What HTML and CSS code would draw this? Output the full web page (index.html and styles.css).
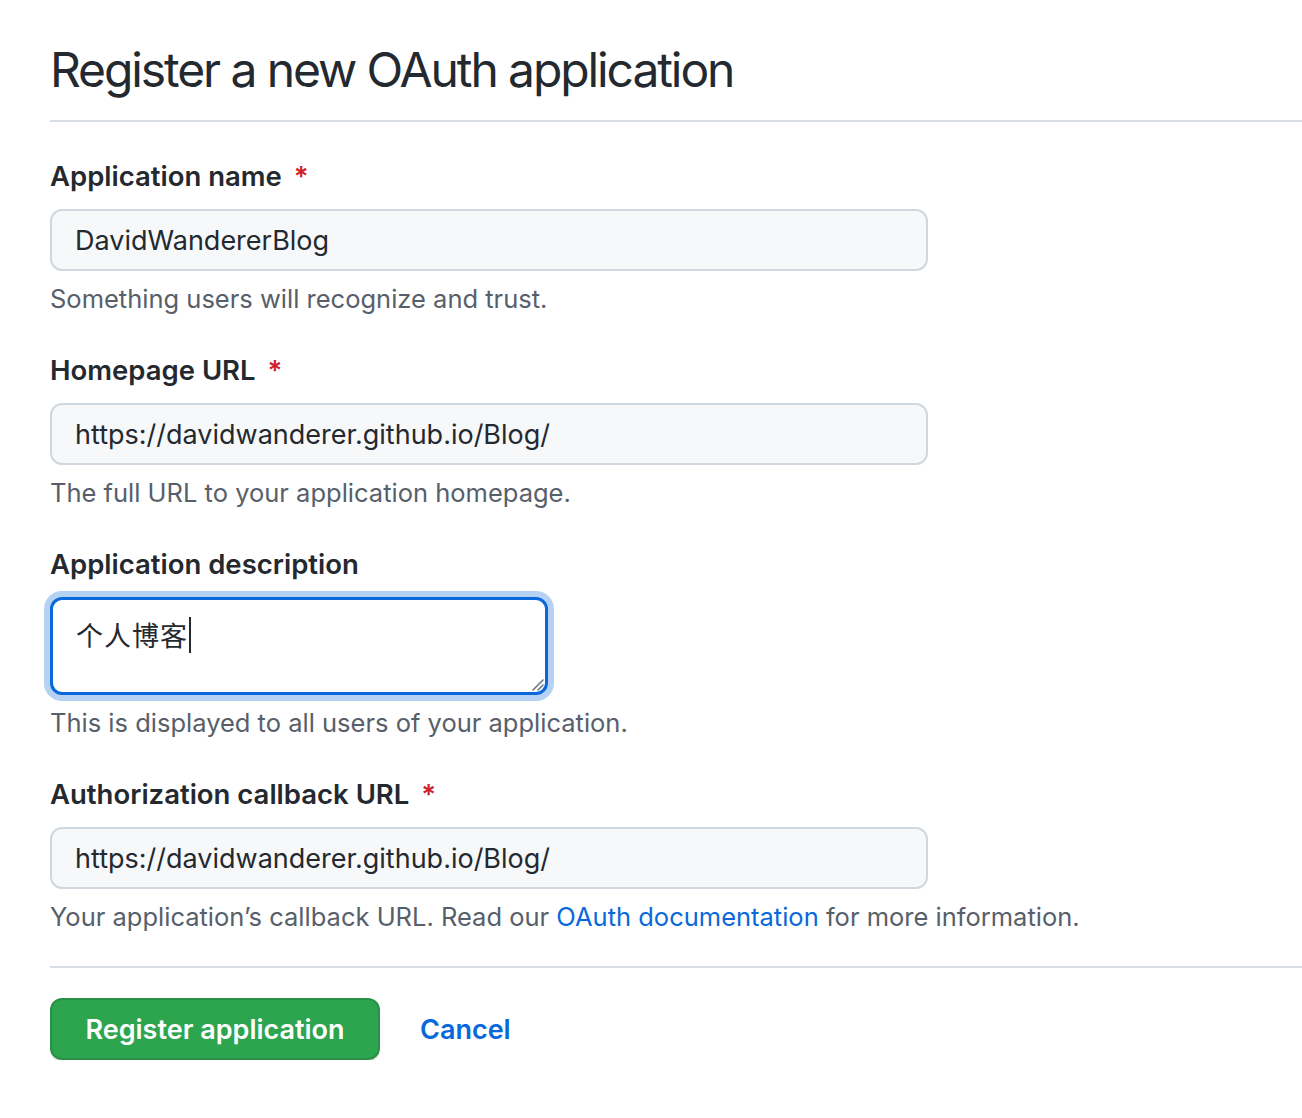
FILE: index.html
```html
<!DOCTYPE html>
<html lang="en">
<head>
<meta charset="utf-8">
<title>Register a new OAuth application</title>
<link rel="stylesheet" href="styles.css">
</head>
<body>
<div class="page">
  <h1 class="title">Register a new OAuth application</h1>
  <hr class="rule">
  <form class="form">
    <div class="group">
      <label class="label">Application name <span class="req">*</span></label>
      <div class="input">DavidWandererBlog</div>
      <p class="note">Something users will recognize and trust.</p>
    </div>
    <div class="group">
      <label class="label">Homepage URL <span class="req">*</span></label>
      <div class="input">https://davidwanderer.github.io/Blog/</div>
      <p class="note">The full URL to your application homepage.</p>
    </div>
    <div class="group">
      <label class="label">Application description</label>
      <div class="textarea"><span class="cjk">个人博客</span><span class="caret"></span>
        <svg class="grip" width="14" height="14" viewBox="0 0 14 14"><path d="M13 3 L3 13 M13 8 L8 13" stroke="#6e7781" stroke-width="1.6" fill="none" stroke-linecap="round"/></svg>
      </div>
      <p class="note">This is displayed to all users of your application.</p>
    </div>
    <div class="group">
      <label class="label">Authorization callback URL <span class="req">*</span></label>
      <div class="input">https://davidwanderer.github.io/Blog/</div>
      <p class="note">Your application’s callback URL. Read our <a class="link" href="#">OAuth documentation</a> for more information.</p>
    </div>
  </form>
  <hr class="rule rule-bottom">
  <div class="actions">
    <button class="btn" type="button">Register application</button>
    <a class="cancel" href="#">Cancel</a>
  </div>
</div>
</body>
</html>
```
FILE: styles.css
```css
* { box-sizing: border-box; }
html, body { margin: 0; padding: 0; background: #ffffff; }
body {
  font-family: Inter, "Noto Sans", "Liberation Sans", sans-serif;
  color: #24292f;
}
.page {
  padding: 28px 0 0 50px;
}
.title {
  margin: 0;
  font-size: 48px;
  font-weight: 400;
  line-height: 84px;
  letter-spacing: -2.1px;
  color: #24292f;
}
.rule {
  margin: 8px 0 0 0;
  border: 0;
  height: 2px;
  background: #d8dee4;
}
.form { padding-top: 34px; }
.group { margin-bottom: 33px; }
.group:last-child { margin-bottom: 0; }
.label {
  display: block;
  font-size: 27.5px;
  font-weight: 600;
  line-height: 40px;
  margin-bottom: 13px;
  color: #24292f;
}
.req { color: #cf222e; margin-left: 5px; }
.input {
  width: 878px;
  height: 62px;
  padding: 0 23px;
  display: flex;
  align-items: center;
  font-size: 27px;
  color: #24292f;
  background: #f6f8fa;
  border: 2px solid #d0d7de;
  border-radius: 12px;
}
.textarea {
  position: relative;
  width: 498px;
  height: 98px;
  padding: 14px 23px;
  font-size: 27px;
  line-height: 42px;
  background: #ffffff;
  border: 3px solid #0969da;
  border-radius: 12px;
  box-shadow: 0 0 0 6px rgba(9, 105, 218, 0.3);
  display: flex;
  align-items: flex-start;
}
.cjk { font-family: "Noto Sans CJK SC", sans-serif; color: #24292f; letter-spacing: 1px; }
.caret {
  display: inline-block;
  width: 2px;
  height: 36px;
  margin-top: 3px;
  margin-left: 1px;
  background: #24292f;
}
.grip { position: absolute; right: 1px; bottom: 1px; }
.note {
  margin: 10px 0 0 0;
  font-size: 25.5px;
  line-height: 36px;
  color: #57606a;
}
.link { color: #0969da; text-decoration: none; }
.rule-bottom { margin-top: 31px; }
.actions {
  display: flex;
  align-items: center;
  gap: 40px;
  padding-top: 30px;
}
.btn {
  width: 330px;
  height: 62px;
  font-family: inherit;
  font-size: 27px;
  font-weight: 600;
  color: #ffffff;
  background: #2da44e;
  border: 2px solid rgba(27, 31, 36, 0.15);
  border-radius: 12px;
  box-shadow: 0 2px 0 rgba(27, 31, 36, 0.1);
  padding: 0 32px;
}
.cancel {
  font-size: 27px;
  font-weight: 600;
  color: #0969da;
  text-decoration: none;
}
```
